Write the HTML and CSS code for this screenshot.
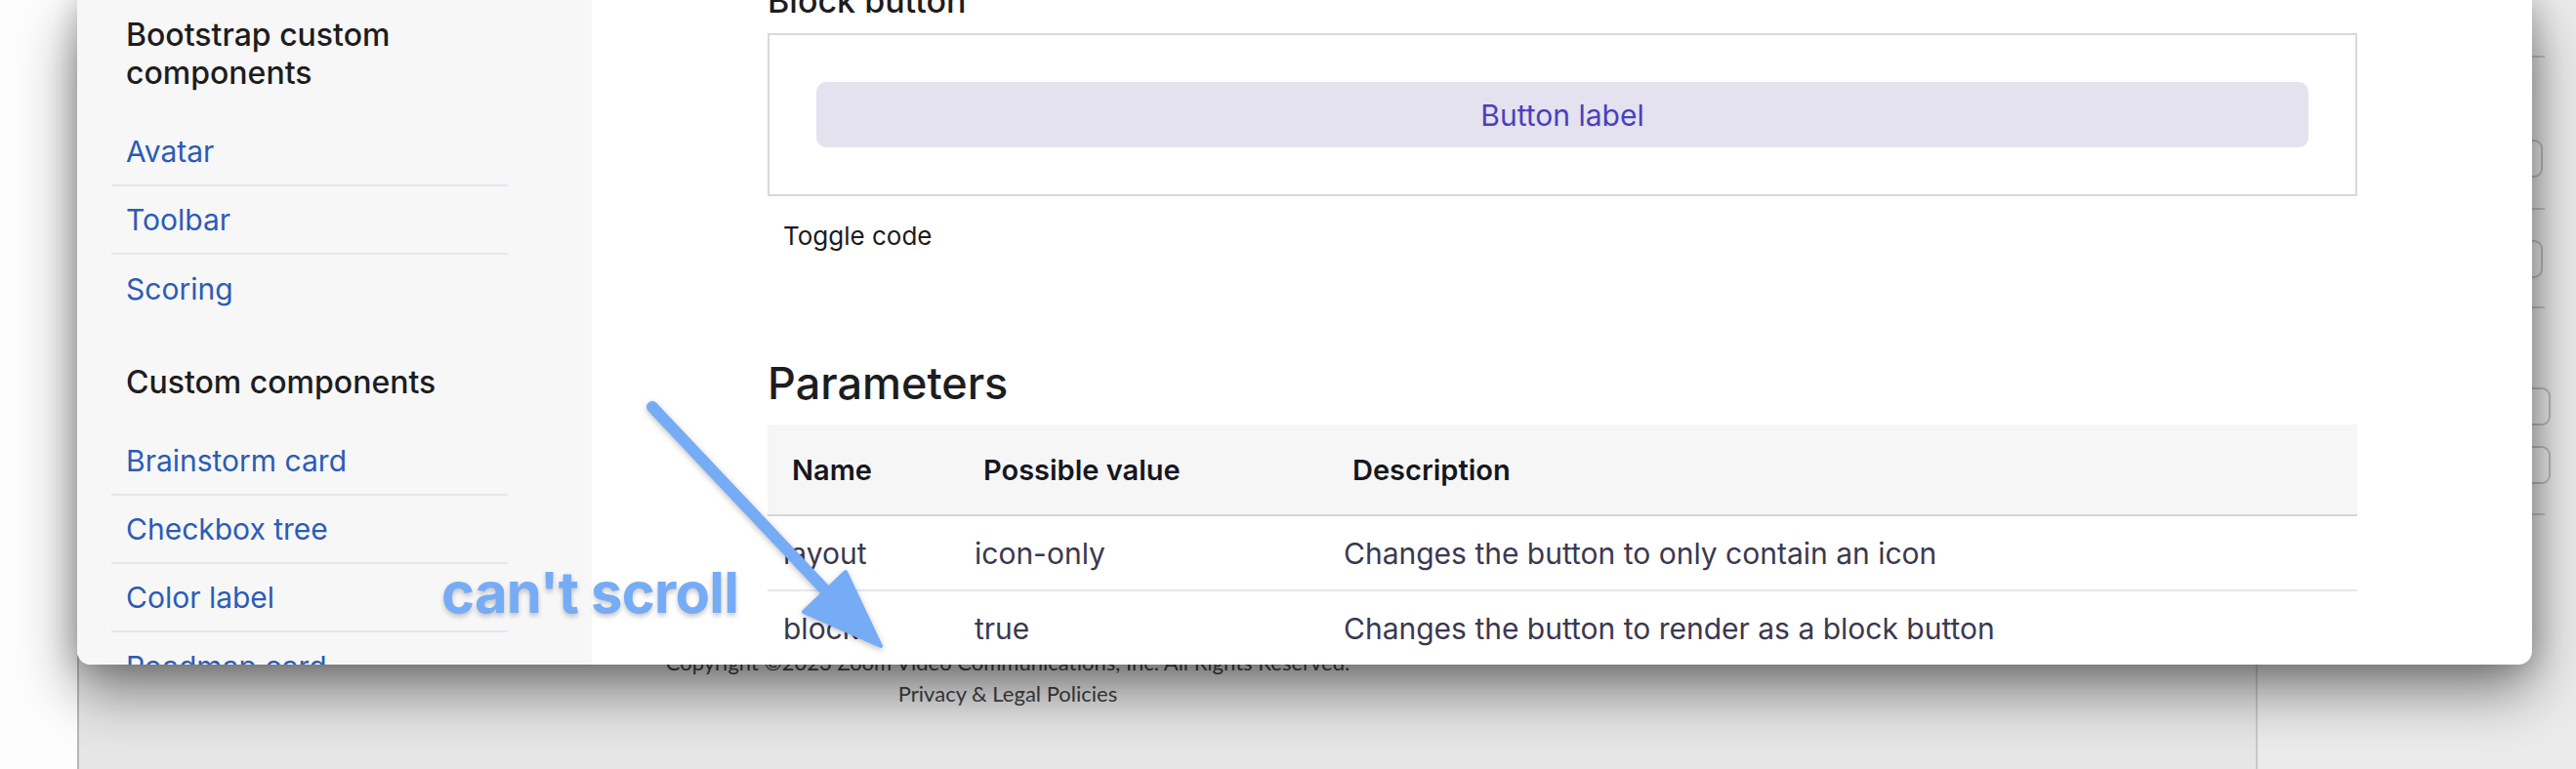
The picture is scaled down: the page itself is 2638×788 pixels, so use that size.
FILE: index.html
```html
<!DOCTYPE html>
<html lang="en">
<head>
<meta charset="utf-8">
<title>Button docs</title>
<link rel="stylesheet" href="styles.css">
</head>
<body>
<div class="backdrop">
  <div class="edge"></div>
  <div class="page">
    <footer class="page-footer">
      <p class="copyright">Copyright ©2023 Zoom Video Communications, Inc. All Rights Reserved.</p>
      <p class="legal">Privacy &amp; Legal Policies</p>
    </footer>
  </div>
  <div class="side-panel">
    <div class="sp-line sp-l1"></div>
    <div class="sp-input sp-i1"></div>
    <div class="sp-line sp-l2"></div>
    <div class="sp-input sp-i2"></div>
    <div class="sp-line sp-l3"></div>
    <div class="sp-input sp-i3 wide"></div>
    <div class="sp-input sp-i4 wide"></div>
    <div class="sp-line sp-l4"></div>
  </div>
</div>

<div class="modal">
  <aside class="sidebar">
    <h4 class="nav-title">Bootstrap custom components</h4>
    <ul class="nav-list">
      <li><a href="#">Avatar</a></li>
      <li><a href="#">Toolbar</a></li>
      <li><a href="#">Scoring</a></li>
    </ul>
    <h4 class="nav-title second">Custom components</h4>
    <ul class="nav-list">
      <li><a href="#">Brainstorm card</a></li>
      <li><a href="#">Checkbox tree</a></li>
      <li><a href="#">Color label</a></li>
      <li><a href="#">Roadmap card</a></li>
    </ul>
  </aside>
  <main class="main">
    <h3 class="example-title">Block button</h3>
    <div class="demo">
      <button class="btn-block" type="button">Button label</button>
    </div>
    <div class="toggle">Toggle code</div>
    <h2 class="section-title">Parameters</h2>
    <table class="params">
      <colgroup>
        <col class="c1"><col class="c2"><col class="c3">
      </colgroup>
      <thead>
        <tr><th>Name</th><th>Possible value</th><th>Description</th></tr>
      </thead>
      <tbody>
        <tr><td>layout</td><td>icon-only</td><td>Changes the button to only contain an icon</td></tr>
        <tr><td>block</td><td>true</td><td>Changes the button to render as a block button</td></tr>
      </tbody>
    </table>
  </main>
</div>

<div class="annotation">
  <svg class="arrow" width="2638" height="788" viewBox="0 0 2638 788">
    <line x1="668" y1="417" x2="850" y2="610" stroke="#76acf5" stroke-width="12" stroke-linecap="round"/>
    <polygon points="866,586 902,662 823,627" fill="#76acf5" stroke="#76acf5" stroke-width="4" stroke-linejoin="round"/>
  </svg>
  <span class="note">can't scroll</span>
</div>
</body>
</html>
```

FILE: styles.css
```css
* { box-sizing: border-box; }
html, body { margin: 0; padding: 0; }
body {
  width: 2638px;
  height: 788px;
  overflow: hidden;
  background: #ffffff;
  font-family: "Inter", "Liberation Sans", sans-serif;
  position: relative;
}

/* background window behind the modal */
.backdrop {
  display: flex;
  height: 788px;
}
.edge {
  width: 79px;
  background: #fdfdfd;
}
.page {
  width: 2231px;
  background: #e6e6e6;
  border-left: 2px solid #b5b5b5;
}
.page-footer {
  width: 1902px;
  padding-top: 663px;
  text-align: center;
  font-family: "Lato", "Liberation Sans", sans-serif;
  font-size: 22px;
  color: #404040;
}
.page-footer p { margin: 0; line-height: 32px; }

.side-panel {
  flex: 1;
  background: #ebebeb;
  border-left: 2px solid #c9c9c9;
  display: flex;
  flex-direction: column;
  padding-left: 20px;
}
.sp-line { height: 2px; background: #c4c4c4; width: 274px; }
.sp-input {
  height: 39px;
  width: 272px;
  border: 2px solid #bdbdbd;
  border-radius: 9px;
  background: #f0f0f0;
}
.sp-input.wide { width: 280px; }
.sp-l1 { margin-top: 57px; }
.sp-i1 { margin-top: 84px; }
.sp-l2 { margin-top: 31px; }
.sp-i2 { margin-top: 31px; }
.sp-l3 { margin-top: 29px; }
.sp-i3 { margin-top: 81px; }
.sp-i4 { margin-top: 21px; }
.sp-l4 { margin-top: 30px; }

/* modal */
.modal {
  position: absolute;
  left: 79px;
  top: 0;
  width: 2514px;
  height: 681px;
  background: #ffffff;
  border-radius: 0 0 14px 14px;
  overflow: hidden;
  display: flex;
  box-shadow: 0 26px 60px rgba(0, 0, 0, 0.48), 0 0 30px rgba(0, 0, 0, 0.22);
}

.sidebar {
  width: 527px;
  flex: none;
  background: #f7f7f7;
  padding: 16px 86px 0 35px;
}
.nav-title {
  margin: 0 0 0 15px;
  font-size: 32px;
  line-height: 39px;
  font-weight: 500;
  color: #1d1d1f;
}
.nav-title.second { margin-top: 41px; }
.nav-list {
  list-style: none;
  margin: 27px 0 0 0;
  padding: 0;
}
.nav-list li {
  height: 70px;
  display: flex;
  align-items: center;
  padding-left: 15px;
  border-bottom: 2px solid #e6e5ec;
}
.nav-list li:last-child { border-bottom: none; }
.nav-list a {
  color: #2b5cb6;
  text-decoration: none;
  font-size: 30px;
  line-height: 36px;
}

.main {
  flex: 1;
  padding: 0 179px 0 180px;
}
.example-title {
  margin: -19px 0 0 0;
  font-size: 34px;
  line-height: 40px;
  font-weight: 500;
  color: #1d1d1f;
}
.demo {
  margin-top: 13px;
  border: 2px solid #d8d8df;
  padding: 48px;
}
.btn-block {
  display: block;
  width: 100%;
  height: 67px;
  border: none;
  border-radius: 10px;
  background: #e3e2ee;
  color: #4a3fbd;
  font-family: "Inter", "Liberation Sans", sans-serif;
  font-size: 30px;
}
.toggle {
  margin: 23px 0 0 16px;
  font-size: 26px;
  line-height: 36px;
  color: #1b1b22;
}
.section-title {
  margin: 105px 0 0 0;
  font-size: 45px;
  line-height: 56px;
  font-weight: 500;
  color: #1d1d1f;
}
.params {
  margin-top: 14px;
  width: 100%;
  border-collapse: collapse;
  table-layout: fixed;
}
.c1 { width: 196px; }
.c2 { width: 378px; }
.params th {
  height: 93px;
  background: #f6f6f6;
  border-bottom: 2px solid #d5d4dc;
  text-align: left;
  padding: 0 0 0 25px;
  font-size: 29px;
  font-weight: 600;
  color: #16161f;
}
.params td {
  height: 77px;
  border-bottom: 2px solid #e7e6ed;
  padding: 0 0 0 16px;
  font-size: 30px;
  color: #3b3850;
}

/* annotation overlay */
.annotation {
  position: absolute;
  left: 0;
  top: 0;
  width: 2638px;
  height: 788px;
  pointer-events: none;
}
.arrow {
  position: absolute;
  left: 0;
  top: 0;
  filter: drop-shadow(0 2px 3px rgba(0, 0, 0, 0.25));
}
.note {
  position: absolute;
  left: 452px;
  top: 572px;
  font-family: "Inter", "Liberation Sans", sans-serif;
  font-weight: 700;
  font-size: 58px;
  line-height: 70px;
  letter-spacing: -0.8px;
  color: #76acf5;
  text-shadow: 0 3px 5px rgba(0, 0, 0, 0.22);
}
```
